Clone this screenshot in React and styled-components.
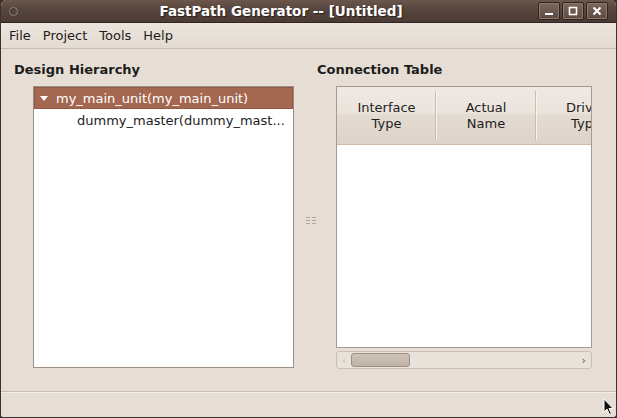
import React from 'react';
import styled, { createGlobalStyle } from 'styled-components';

const GlobalStyle = createGlobalStyle`
  html, body {
    margin: 0;
    padding: 0;
    background: #3a302b;
  }
  body {
    font-family: "DejaVu Sans", "Liberation Sans", sans-serif;
    font-size: 13px;
    color: #1e1e1e;
  }
`;

const Window = styled.div`
  width: 617px;
  height: 418px;
  box-sizing: border-box;
  display: flex;
  flex-direction: column;
  background: #e6ded5;
  border: 1px solid #3b322d;
  border-top: none;
  border-radius: 6px 6px 3px 3px;
  overflow: hidden;
  position: relative;
`;

const TitleBar = styled.div`
  height: 22px;
  flex: none;
  display: flex;
  align-items: center;
  padding: 0 8px 0 8px;
  background: linear-gradient(#6a564c, #56453d 45%, #4a3b34);
  border-bottom: 1px solid #2f2622;
`;

const MenuRing = styled.div`
  width: 7px;
  height: 7px;
  border-radius: 50%;
  border: 1px solid #8e7f77;
  box-shadow: inset 1px 1px 0 #3a2e29;
`;

const Title = styled.div`
  flex: 1;
  text-align: center;
  color: #ffffff;
  font-weight: bold;
  font-size: 13.5px;
  text-shadow: 1px 1px 1px #2a201c;
  padding-left: 6px;
`;

const WinButtons = styled.div`
  display: flex;
  gap: 2px;
`;

const WinButton = styled.div`
  width: 22px;
  height: 18px;
  box-sizing: border-box;
  border: 1px solid #2e2521;
  border-radius: 2px;
  background: linear-gradient(#7c675c, #5c4a41);
  box-shadow: inset 0 0 0 1px #8f796d;
  display: flex;
  align-items: center;
  justify-content: center;
`;

const MenuBar = styled.div`
  height: 25px;
  flex: none;
  display: flex;
  align-items: center;
  padding-left: 2px;
  background: linear-gradient(#ece5dd, #e4dbd1);
  border-bottom: 1px solid #cbbcaf;
`;

const MenuItem = styled.div`
  padding: 0 6px;
  font-size: 13px;
  color: #1c1c1c;
`;

const Content = styled.div`
  flex: 1;
  display: flex;
  min-height: 0;
  border-bottom: 1px solid #cbbcaf;
`;

const Pane = styled.div`
  display: flex;
  flex-direction: column;
  width: ${p => p.$width}px;
  flex: none;
  padding-left: ${p => p.$pad}px;
  box-sizing: border-box;
`;

const PaneLabel = styled.div`
  font-weight: bold;
  font-size: 13px;
  margin-top: 13px;
  height: 16px;
  line-height: 16px;
  color: #1c1c1c;
`;

const Handle = styled.div`
  width: 12px;
  flex: none;
  display: flex;
  align-items: center;
  justify-content: center;
`;

const Grip = styled.div`
  display: grid;
  grid-template-columns: 4px 4px;
  gap: 2px 2px;
  span {
    height: 1px;
    background: #b3a597;
  }
`;

const TreeBox = styled.div`
  margin: 8px 0 0 19px;
  width: 261px;
  height: 282px;
  box-sizing: border-box;
  border: 1px solid #9c8f84;
  background: #ffffff;
`;

const TreeRow = styled.div`
  height: 20px;
  display: flex;
  align-items: center;
  padding-left: ${p => p.$indent}px;
  background: ${p => (p.$selected ? '#a3684f' : 'transparent')};
  color: ${p => (p.$selected ? '#ffffff' : '#1c1c1c')};
  border: 1px dotted ${p => (p.$selected ? '#7a4c39' : 'transparent')};
  white-space: nowrap;
`;

const Expander = styled.span`
  width: 0;
  height: 0;
  border-left: 4px solid transparent;
  border-right: 4px solid transparent;
  border-top: 5px solid #ffffff;
  margin: 1px 8px 0 0;
`;

const TableBox = styled.div`
  margin: 8px 0 0 19px;
  width: 256px;
  height: 262px;
  box-sizing: border-box;
  border: 1px solid #a89a8e;
  background: #ffffff;
  overflow: hidden;
`;

const HeaderRow = styled.div`
  display: flex;
  height: 57px;
  background: linear-gradient(#efe9e3 0%, #ebe4dd 45%, #e3dad1 50%, #ddd3c9 100%);
  border-bottom: 1px solid #cbbcaf;
`;

const HeaderCell = styled.div`
  width: ${p => p.$w}px;
  flex: none;
  display: flex;
  align-items: center;
  justify-content: center;
  text-align: center;
  line-height: 16px;
  position: relative;
  &::after {
    content: '';
    position: absolute;
    right: 0;
    top: 4px;
    bottom: 4px;
    width: 1px;
    background: #cbbdb0;
    box-shadow: 1px 0 0 #f6f2ee;
  }
`;

const ScrollBar = styled.div`
  margin: 3px 0 0 19px;
  width: 256px;
  height: 18px;
  box-sizing: border-box;
  border: 1px solid #cbbdb1;
  border-radius: 3px;
  background: #e9e2da;
  display: flex;
  align-items: center;
  padding: 0 5px;
`;

const Thumb = styled.div`
  width: 59px;
  height: 14px;
  box-sizing: border-box;
  margin-left: 5px;
  border: 1px solid #9e8f83;
  border-radius: 3px;
  background: linear-gradient(#cfc3b8, #bfb1a5);
`;

const Arrow = styled.span`
  font-size: 11px;
  color: ${p => p.$muted ? '#c8bcb1' : '#5e534c'};
  margin-left: ${p => p.$push ? 'auto' : '0'};
  line-height: 1;
`;

const StatusBar = styled.div`
  height: 24px;
  flex: none;
  border-top: 1px solid #f3eee9;
`;

const Pointer = styled.svg`
  position: absolute;
  right: 1px;
  bottom: 1px;
`;

export default function App() {
  return (
    <>
      <GlobalStyle />
      <Window>
        <TitleBar>
          <MenuRing />
          <Title>FastPath Generator -- [Untitled]</Title>
          <WinButtons>
            <WinButton>
              <svg width="10" height="10" viewBox="0 0 10 10">
                <rect x="1" y="7" width="8" height="2" fill="#fff" />
              </svg>
            </WinButton>
            <WinButton>
              <svg width="10" height="10" viewBox="0 0 10 10">
                <rect x="1.5" y="1.5" width="7" height="7" fill="none" stroke="#fff" strokeWidth="1.6" />
              </svg>
            </WinButton>
            <WinButton>
              <svg width="10" height="10" viewBox="0 0 10 10">
                <path d="M1.5 1.5 L8.5 8.5 M8.5 1.5 L1.5 8.5" stroke="#fff" strokeWidth="2" />
              </svg>
            </WinButton>
          </WinButtons>
        </TitleBar>

        <MenuBar>
          <MenuItem>File</MenuItem>
          <MenuItem>Project</MenuItem>
          <MenuItem>Tools</MenuItem>
          <MenuItem>Help</MenuItem>
        </MenuBar>

        <Content>
          <Pane $width={304} $pad={13}>
            <PaneLabel>Design Hierarchy</PaneLabel>
            <TreeBox>
              <TreeRow $selected $indent={5}>
                <Expander />
                my_main_unit(my_main_unit)
              </TreeRow>
              <TreeRow $indent={42}>dummy_master(dummy_mast...</TreeRow>
            </TreeBox>
          </Pane>

          <Handle>
            <Grip>
              <span /><span /><span /><span /><span /><span />
            </Grip>
          </Handle>

          <Pane $width={300} $pad={0}>
            <PaneLabel>Connection Table</PaneLabel>
            <TableBox>
              <HeaderRow>
                <HeaderCell $w={99}>Interface<br />Type</HeaderCell>
                <HeaderCell $w={100}>Actual<br />Name</HeaderCell>
                <HeaderCell $w={100}>Driver<br />Type</HeaderCell>
              </HeaderRow>
            </TableBox>
            <ScrollBar>
              <Arrow $muted>‹</Arrow>
              <Thumb />
              <Arrow $push>›</Arrow>
            </ScrollBar>
          </Pane>
        </Content>

        <StatusBar />
        <Pointer width="12" height="18" viewBox="0 0 12 18">
          <path d="M1 1 L1 14 L4 11 L6.5 16.5 L8.5 15.5 L6 10.5 L10 10.5 Z" fill="#111" stroke="#fff" strokeWidth="1" />
        </Pointer>
      </Window>
    </>
  );
}
